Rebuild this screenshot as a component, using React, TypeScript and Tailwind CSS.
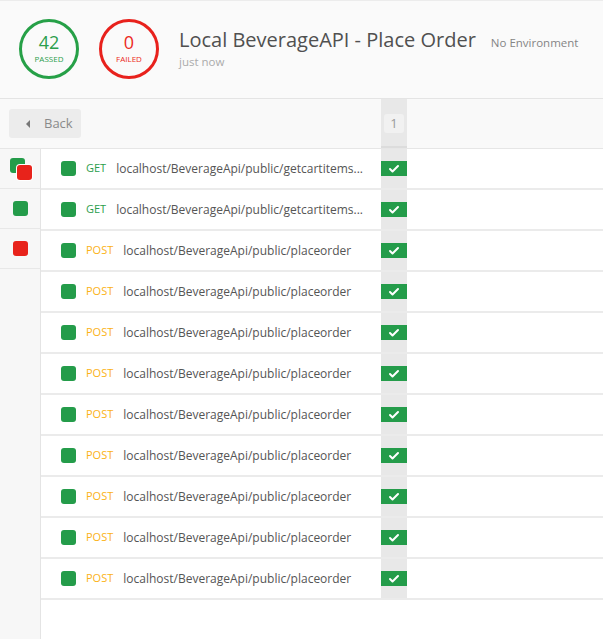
import { Check } from 'lucide-react';

interface Request {
    method: 'GET' | 'POST';
    url: string;
}

const requests: Request[] = [
    { method: 'GET', url: 'localhost/BeverageApi/public/getcartitems...' },
    { method: 'GET', url: 'localhost/BeverageApi/public/getcartitems...' },
    ...Array.from({ length: 9 }, () => ({ method: 'POST' as const, url: 'localhost/BeverageApi/public/placeorder' })),
];

function Stat({ value, label, tone }: { value: number; label: string; tone: 'pass' | 'fail' }) {
    const ring = tone === 'pass' ? 'border-[#26a047] text-[#2b9e4c]' : 'border-[#e8211c] text-[#ec2a22]';
    return (
        <div className={`w-[60px] h-[60px] rounded-full border-[3px] flex flex-col items-center justify-center shrink-0 ${ring}`}>
            <div className="text-[18px] leading-[22px] mt-[-1px]">{value}</div>
            <div className="text-[8px] leading-[12px] uppercase">{label}</div>
        </div>
    );
}

function Square({ color, className = '' }: { color: 'green' | 'red'; className?: string }) {
    const bg = color === 'green' ? 'bg-[#249c4a]' : 'bg-[#e8231b]';
    return <div className={`w-[15px] h-[15px] rounded-[3px] ${bg} ${className}`} />;
}

export default function App() {
    return (
        <div className="w-[603px] h-[639px] overflow-hidden bg-white font-['Open_Sans',sans-serif]">
            {/* summary header */}
            <div className="h-[99px] bg-[#fafafa] border-t border-[#ececec] border-b border-b-[#e4e4e4] flex items-center pl-[19px]">
                <div className="flex gap-[20px] mt-[-2px]">
                    <Stat value={42} label="Passed" tone="pass" />
                    <Stat value={0} label="Failed" tone="fail" />
                </div>
                <div className="ml-[20px] mt-[-4px] whitespace-nowrap">
                    <div className="flex items-baseline gap-[15px]">
                        <span className="text-[20px] leading-[28px] text-[#505050]">Local BeverageAPI - Place Order</span>
                        <span className="text-[11.5px] text-[#858585]">No Environment</span>
                    </div>
                    <div className="text-[11.5px] leading-[16px] text-[#ababab]">just now</div>
                </div>
            </div>

            {/* toolbar */}
            <div className="h-[50px] bg-[#f9f9f9] border-b border-[#e6e6e6] flex">
                <div className="w-[381px] flex items-center pl-[9px]">
                    <button className="h-[29px] w-[72px] rounded-[3px] bg-[#ececec] flex items-center pl-[17px] gap-[14px]">
                        <span className="w-0 h-0 border-y-[4px] border-y-transparent border-r-[4px] border-r-[#777]" />
                        <span className="text-[13px] text-[#8a8a8a]">Back</span>
                    </button>
                </div>
                <div className="w-[26px] bg-[#e8e8e8] flex justify-center pt-[15px] border-b-2 border-[#dcdcdc]">
                    <div className="w-[20px] h-[19px] rounded-[3px] bg-[#f1f1f1] text-[13px] text-[#9a9a9a] flex items-center justify-center">1</div>
                </div>
                <div className="flex-1" />
            </div>

            <div className="flex h-[490px]">
                {/* iteration sidebar */}
                <div className="w-[41px] bg-[#f7f7f7] border-r border-[#e4e4e4] shrink-0">
                    <div className="h-[40px] border-b border-[#e8e8e8] relative">
                        <Square color="green" className="absolute left-[10px] top-[9px]" />
                        <div className="absolute left-[16px] top-[15px] p-[1px] bg-white rounded-[4px]">
                            <Square color="red" />
                        </div>
                    </div>
                    <div className="h-[40px] border-b border-[#e8e8e8] flex items-center justify-center">
                        <Square color="green" />
                    </div>
                    <div className="h-[40px] border-b border-[#e8e8e8] flex items-center justify-center">
                        <Square color="red" />
                    </div>
                </div>

                {/* request rows */}
                <div className="flex-1">
                    {requests.map((r, i) => (
                        <div key={i} className="h-[41px] border-b-2 border-[#ebebeb] flex">
                            <div className="w-[340px] flex items-center pl-[20px] gap-[10px] whitespace-nowrap">
                                <Square color="green" className="shrink-0" />
                                <span className={`text-[11px] ${r.method === 'GET' ? 'text-[#2b9e4c]' : 'text-[#fbb217]'}`}>{r.method}</span>
                                <span className="text-[12px] text-[#555]">{r.url}</span>
                            </div>
                            <div className="w-[26px] bg-[#e8e8e8] flex items-center">
                                <div className="w-full h-[15px] bg-[#249c4a] flex items-center justify-center">
                                    <Check size={12} strokeWidth={4} color="#fff" />
                                </div>
                            </div>
                            <div className="flex-1" />
                        </div>
                    ))}
                </div>
            </div>
        </div>
    );
}
